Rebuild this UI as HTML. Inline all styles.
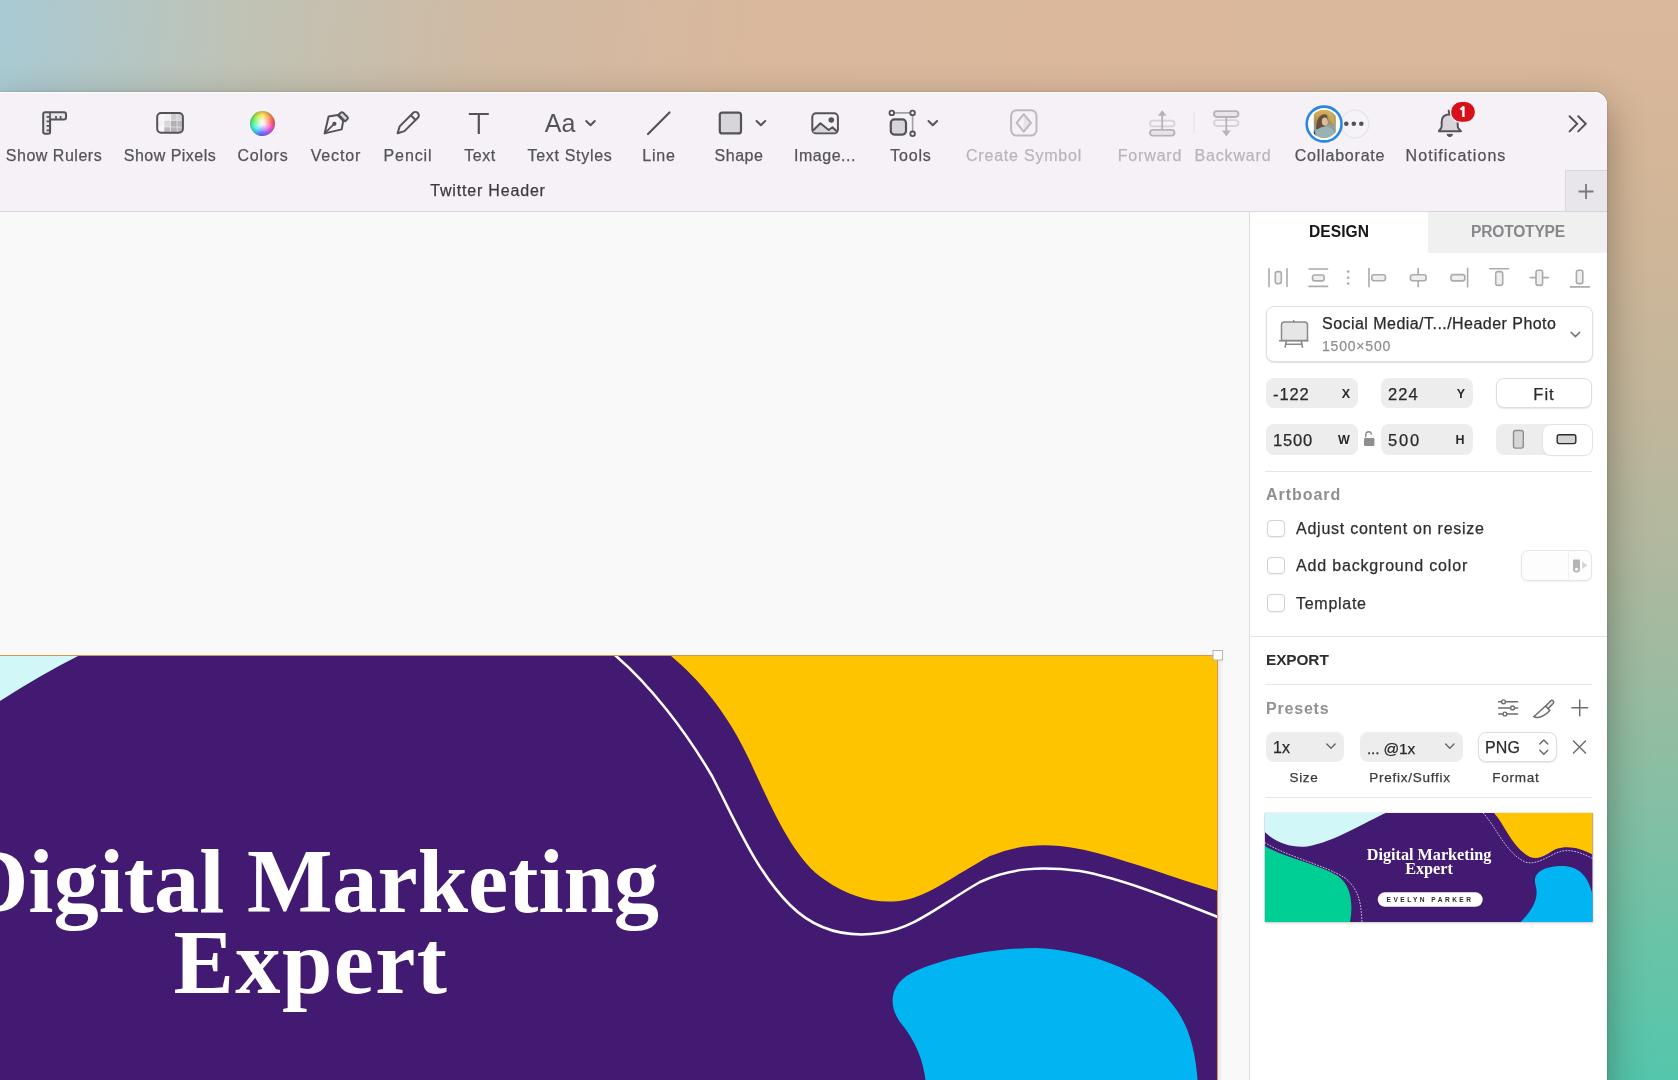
<!DOCTYPE html>
<html><head><meta charset="utf-8">
<style>
*{box-sizing:border-box;margin:0;padding:0}
html,body{width:1678px;height:1080px;overflow:hidden}
body{position:relative;font-family:"Liberation Sans",sans-serif;background:#dbb89c}
svg{position:absolute;left:0;top:0;overflow:visible}
.t{will-change:transform}
.r{-webkit-text-stroke:.25px currentColor}
</style></head><body>
<div style="position:absolute;left:0px;top:0px;width:1678px;height:1080px;background:linear-gradient(97deg,#a8cad4 0%,#bfc3b6 13%,#d0baa3 27%,#d9b89d 42%,#dbb89c 60%,#d9b89c 100%)"></div><div style="position:absolute;left:1560px;top:0px;width:118px;height:1080px;background:linear-gradient(180deg,#dab89c 0%,#d6b698 12%,#cdb699 25%,#c3b69b 36%,#b2b89e 50%,#9dbba1 62%,#86bfa4 74%,#6cc3a7 86%,#54c6ab 100%)"></div><div style="position:absolute;left:0px;top:92px;width:1607px;height:1000px;border-top-right-radius:13px;box-shadow:0 14px 38px rgba(40,35,25,.42),0 0 2px rgba(0,0,0,.25)"></div><div style="position:absolute;left:0px;top:92px;width:1607px;height:1000px;border-top-right-radius:13px;background:#f9f9f9;overflow:hidden"></div><div style="position:absolute;left:0px;top:92px;width:1607px;height:119px;border-top-right-radius:13px;background:#f5f1f7;box-shadow:inset 0 1px 0 rgba(255,255,255,.9)"></div><div style="position:absolute;left:0px;top:211px;width:1607px;height:1px;background:#d9d6db"></div><div style="position:absolute;left:1565px;top:170px;width:42px;height:41px;background:#e9e6eb;border-left:1px solid #d9d6db;border-top:1px solid #d9d6db"></div><svg width="1678" height="1080"><path d="M1578.5 191.5h15M1586 184v15" stroke="#7b787e" stroke-width="1.8"/></svg><div class="t r" style="position:absolute;left:-945.84px;top:147.76px;width:2000px;text-align:center;font-family:'Liberation Sans';font-size:16px;line-height:16px;color:#555258;font-weight:400;letter-spacing:0.52px;white-space:nowrap;">Show Rulers</div><div class="t r" style="position:absolute;left:-829.66px;top:147.76px;width:2000px;text-align:center;font-family:'Liberation Sans';font-size:16px;line-height:16px;color:#555258;font-weight:400;letter-spacing:0.47px;white-space:nowrap;">Show Pixels</div><div class="t r" style="position:absolute;left:-737.21px;top:147.76px;width:2000px;text-align:center;font-family:'Liberation Sans';font-size:16px;line-height:16px;color:#555258;font-weight:400;letter-spacing:0.79px;white-space:nowrap;">Colors</div><div class="t r" style="position:absolute;left:-663.75px;top:147.76px;width:2000px;text-align:center;font-family:'Liberation Sans';font-size:16px;line-height:16px;color:#555258;font-weight:400;letter-spacing:0.89px;white-space:nowrap;">Vector</div><div class="t r" style="position:absolute;left:-592.15px;top:147.76px;width:2000px;text-align:center;font-family:'Liberation Sans';font-size:16px;line-height:16px;color:#555258;font-weight:400;letter-spacing:0.89px;white-space:nowrap;">Pencil</div><div class="t r" style="position:absolute;left:-520.21px;top:147.76px;width:2000px;text-align:center;font-family:'Liberation Sans';font-size:16px;line-height:16px;color:#555258;font-weight:400;letter-spacing:0.58px;white-space:nowrap;">Text</div><div class="t r" style="position:absolute;left:-430.15px;top:147.76px;width:2000px;text-align:center;font-family:'Liberation Sans';font-size:16px;line-height:16px;color:#555258;font-weight:400;letter-spacing:0.69px;white-space:nowrap;">Text Styles</div><div class="t r" style="position:absolute;left:-341.09px;top:147.76px;width:2000px;text-align:center;font-family:'Liberation Sans';font-size:16px;line-height:16px;color:#555258;font-weight:400;letter-spacing:0.82px;white-space:nowrap;">Line</div><div class="t r" style="position:absolute;left:-260.75px;top:147.76px;width:2000px;text-align:center;font-family:'Liberation Sans';font-size:16px;line-height:16px;color:#555258;font-weight:400;letter-spacing:0.5px;white-space:nowrap;">Shape</div><div class="t r" style="position:absolute;left:-174.83px;top:147.76px;width:2000px;text-align:center;font-family:'Liberation Sans';font-size:16px;line-height:16px;color:#555258;font-weight:400;letter-spacing:0.54px;white-space:nowrap;">Image...</div><div class="t r" style="position:absolute;left:-88.60px;top:147.76px;width:2000px;text-align:center;font-family:'Liberation Sans';font-size:16px;line-height:16px;color:#555258;font-weight:400;letter-spacing:0.8px;white-space:nowrap;">Tools</div><div class="t r" style="position:absolute;left:24.09px;top:147.76px;width:2000px;text-align:center;font-family:'Liberation Sans';font-size:16px;line-height:16px;color:#b9b5bb;font-weight:400;letter-spacing:0.78px;white-space:nowrap;">Create Symbol</div><div class="t r" style="position:absolute;left:150.22px;top:147.76px;width:2000px;text-align:center;font-family:'Liberation Sans';font-size:16px;line-height:16px;color:#b9b5bb;font-weight:400;letter-spacing:0.85px;white-space:nowrap;">Forward</div><div class="t r" style="position:absolute;left:233.01px;top:147.76px;width:2000px;text-align:center;font-family:'Liberation Sans';font-size:16px;line-height:16px;color:#b9b5bb;font-weight:400;letter-spacing:0.82px;white-space:nowrap;">Backward</div><div class="t r" style="position:absolute;left:339.60px;top:147.76px;width:2000px;text-align:center;font-family:'Liberation Sans';font-size:16px;line-height:16px;color:#555258;font-weight:400;letter-spacing:0.79px;white-space:nowrap;">Collaborate</div><div class="t r" style="position:absolute;left:455.93px;top:147.76px;width:2000px;text-align:center;font-family:'Liberation Sans';font-size:16px;line-height:16px;color:#555258;font-weight:400;letter-spacing:1.05px;white-space:nowrap;">Notifications</div><div class="t r" style="position:absolute;left:-511.59px;top:183.26px;width:2000px;text-align:center;font-family:'Liberation Sans';font-size:16px;line-height:16px;color:#3c3a3f;font-weight:400;letter-spacing:0.82px;white-space:nowrap;">Twitter Header</div><div class="t r" style="position:absolute;left:-440.20px;top:110.64px;width:2000px;text-align:center;font-family:'Liberation Sans';font-size:25px;line-height:25px;color:#555258;font-weight:400;letter-spacing:0px;white-space:nowrap;-webkit-text-stroke:0">Aa</div><svg width="1678" height="1080"><path d="M43.2 114.2q0-2 2-2h18.8q2 0 2 2v3.2q0 2-2 2h-13.9v12.3q0 2-2 2h-2.9q-2 0-2-2z" fill="#e9e6ea" fill="none" stroke="#555258" stroke-width="2" stroke-linecap="round" stroke-linejoin="round"/><path d="M50 112.5V133.5M46.6 116.9H50M46.6 121.3H50M46.6 125.8H50M46.6 130.3H50M56 115.9V119M60.6 115.9V119" stroke="#555258" stroke-width="1.7"/><defs><clipPath id="pxc"><rect x="157.2" y="113" width="25.7" height="19.8" rx="4"/></clipPath></defs><g clip-path="url(#pxc)"><rect x="157.5" y="113.5" width="6.6" height="6.9" fill="#f7f5f8"/><rect x="164" y="113.5" width="6.6" height="6.9" fill="#f2f0f3"/><rect x="170.5" y="113.5" width="6.6" height="6.9" fill="#cfccd1"/><rect x="177" y="113.5" width="6.6" height="6.9" fill="#d4d1d6"/><rect x="157.5" y="120.3" width="6.6" height="6.9" fill="#f3f1f4"/><rect x="164" y="120.3" width="6.6" height="6.9" fill="#d9d6db"/><rect x="170.5" y="120.3" width="6.6" height="6.9" fill="#b3b0b5"/><rect x="177" y="120.3" width="6.6" height="6.9" fill="#b8b5ba"/><rect x="157.5" y="127" width="6.6" height="6.9" fill="#f7f5f8"/><rect x="164" y="127" width="6.6" height="6.9" fill="#bcb9be"/><rect x="170.5" y="127" width="6.6" height="6.9" fill="#b5b2b7"/><rect x="177" y="127" width="6.6" height="6.9" fill="#bdbabf"/><path d="M164 113V133M170.5 113V133M177 113V133M157 120.3H183M157 127H183" stroke="#ffffff" stroke-opacity=".55" stroke-width=".9"/></g><rect x="157.2" y="113" width="25.7" height="19.8" rx="4" fill="none" stroke="#555258" stroke-width="2" stroke-linecap="round" stroke-linejoin="round"/><path d="M324.6 133.4L328.6 116.5L337.6 115.1L343.2 120.8L341.7 129.4Z" fill="none" fill="none" stroke="#555258" stroke-width="2" stroke-linecap="round" stroke-linejoin="round"/><path d="M324.8 133.2L334.2 123.9" stroke="#555258" stroke-width="1.8"/><circle cx="334.4" cy="123.8" r="2.1" fill="#555258"/><path d="M338.6 114.8l2-2q1.3-1.3 2.6 0l4 4q1.3 1.3 0 2.6l-2 2z" fill="#dcd9de" fill="none" stroke="#555258" stroke-width="2" stroke-linecap="round" stroke-linejoin="round"/><g transform="translate(397.6 133.2) rotate(-45)"><path d="M0 0L6.3 -3.4H25.2A3.4 3.4 0 0 1 25.2 3.4H6.3Z" fill="none" fill="none" stroke="#555258" stroke-width="2" stroke-linecap="round" stroke-linejoin="round"/><path d="M22 -3.4V3.4" stroke="#555258" stroke-width="2"/></g><path d="M468.8 114h20M478.8 114v20" stroke="#555258" stroke-width="2.2"/><path d="M586.2 121l4.3 4.3l4.3-4.3" fill="none" stroke="#555258" stroke-width="2" stroke-linecap="round" stroke-linejoin="round"/><path d="M648 134L669.5 112.5" stroke="#555258" stroke-width="2.2" stroke-linecap="round"/><rect x="719.8" y="112.6" width="21.2" height="20.8" rx="2.5" fill="#d8d5da" stroke="#555258" stroke-width="2.2"/><path d="M756.6 121l4.3 4.3l4.3-4.3" fill="none" stroke="#555258" stroke-width="2" stroke-linecap="round" stroke-linejoin="round"/><rect x="812.3" y="113.3" width="25.6" height="20" rx="3.8" fill="none" fill="none" stroke="#555258" stroke-width="2" stroke-linecap="round" stroke-linejoin="round"/><path d="M813.3 130.2L820.4 123.2L828.7 130L832.5 127.3L836.7 131.3V132.3H813.3Z" fill="#d8d5da" stroke="none"/><path d="M813.3 130.2L820.4 123.2L828.7 130L832.5 127.3L836.7 131.3" fill="none" fill="none" stroke="#555258" stroke-width="2" stroke-linecap="round" stroke-linejoin="round"/><circle cx="831.3" cy="120" r="2.8" fill="#555258"/><path d="M891.8 112.9H912.6V133.8" stroke="#a19ea4" stroke-width="1.6" fill="none"/><rect x="890.8" y="119.4" width="15.2" height="15.2" rx="3.5" fill="#d8d5da" stroke="#555258" stroke-width="2.2"/><circle cx="891.8" cy="112.9" r="2.3" fill="#f5f1f7" stroke="#555258" stroke-width="1.8"/><circle cx="912.6" cy="112.9" r="2.3" fill="#f5f1f7" stroke="#555258" stroke-width="1.8"/><circle cx="912.6" cy="133.8" r="2.3" fill="#f5f1f7" stroke="#555258" stroke-width="1.8"/><path d="M928.5 121l4.3 4.3l4.3-4.3" fill="none" stroke="#555258" stroke-width="2" stroke-linecap="round" stroke-linejoin="round"/><rect x="1011.1" y="110.2" width="25.4" height="25.4" rx="5.5" fill="none" stroke="#bdb9bf" stroke-width="2" stroke-linecap="round" stroke-linejoin="round"/><path d="M1023.8 114.2L1031 122.9L1023.8 131.6Z" fill="#e6e3e8"/><path d="M1023.8 114.2L1031 122.9L1023.8 131.6L1016.6 122.9Z" fill="none" stroke="#bdb9bf" stroke-width="2" stroke-linecap="round" stroke-linejoin="round"/><rect x="1150" y="120.6" width="24.5" height="5.8" rx="2.9" fill="none" stroke="#d6d2d8" stroke-width="1.8"/><rect x="1150" y="129.8" width="24.5" height="5.8" rx="2.9" fill="#e8e5ea" stroke="#b6b2b8" stroke-width="1.8"/><path d="M1162.2 129.8V113" stroke="#b6b2b8" stroke-width="1.8"/><path d="M1157.8 115.8L1162.2 110.2L1166.6 115.8Z" fill="#b6b2b8"/><path d="M1194 112.4V133.3" stroke="#e2dfe4" stroke-width="1"/><rect x="1214" y="111.2" width="24.5" height="5.8" rx="2.9" fill="#e8e5ea" stroke="#b6b2b8" stroke-width="1.8"/><rect x="1214" y="120.2" width="24.5" height="5.8" rx="2.9" fill="none" stroke="#d6d2d8" stroke-width="1.8"/><path d="M1226.3 117V133" stroke="#b6b2b8" stroke-width="1.8"/><path d="M1221.9 130.6L1226.3 136.3L1230.7 130.6Z" fill="#b6b2b8"/><circle cx="1355" cy="124" r="13.8" fill="#f6f3f8" stroke="#e6e3e8" stroke-width="1.2"/><circle cx="1346.3" cy="123.8" r="2.3" fill="#555258"/><circle cx="1353.8" cy="123.8" r="2.3" fill="#555258"/><circle cx="1361.3" cy="123.8" r="2.3" fill="#555258"/><defs><clipPath id="av"><circle cx="1324.1" cy="124" r="14.2"/></clipPath><linearGradient id="avg" x1="0" y1="0" x2="0" y2="1"><stop offset="0" stop-color="#d9b45c"/><stop offset=".45" stop-color="#a88f55"/><stop offset=".6" stop-color="#8fa3a0"/><stop offset="1" stop-color="#7f9898"/></linearGradient></defs><circle cx="1324.1" cy="124" r="17.4" fill="#fff" stroke="#2a87e0" stroke-width="2.6"/><filter id="avb" x="-20%" y="-20%" width="140%" height="140%"><feGaussianBlur stdDeviation="0.55"/></filter><g clip-path="url(#av)"><g filter="url(#avb)"><rect x="1313.8" y="109.7" width="22" height="28.2" fill="url(#avg)"/><path d="M1327 111l6 2l2 12l-4-3z" fill="#c9b26a" opacity=".7"/><path d="M1316 129q0-9 4-13q4-3 7-1l1 5q-3 5-5 9z" fill="#6a5038"/><ellipse cx="1324.8" cy="121.5" rx="3" ry="4" fill="#d9bba6"/><path d="M1314 138q1-9 8-11q6-1 10 2q3 3 4 9z" fill="#9ab2b3"/><path d="M1313.8 130l3 8h-3z" fill="#2a2a22"/></g></g><path d="M1438.9 131.2H1460.9L1458.4 128.3Q1457.7 127.4 1457.7 125.8V121.8Q1457.7 114.6 1449.8 114.3Q1441.7 114.6 1441.7 121.8V125.8Q1441.7 127.4 1441 128.3Z" fill="#d9d6db" fill="none" stroke="#555258" stroke-width="2" stroke-linecap="round" stroke-linejoin="round"/><path d="M1449.6 114.3L1448.6 110.6" stroke="#555258" stroke-width="2" stroke-linecap="round"/><path d="M1447 134.4H1452.6Q1451.8 136.6 1449.8 136.6Q1447.8 136.6 1447 134.4Z" fill="#555258" stroke="#555258" stroke-width="1"/><rect x="1450.5" y="101.4" width="25" height="21" rx="10.5" fill="#d8101a" stroke="#f5f1f7" stroke-width="1.2"/><path d="M1460.4 109.6L1463.4 107.2V116.9" fill="none" stroke="#fff" stroke-width="2.4" stroke-linejoin="round"/><path d="M1569.6 116.2l7.6 7.6-7.6 7.6M1578.2 116.2l7.6 7.6-7.6 7.6" fill="none" stroke="#555258" stroke-width="2" stroke-linecap="round"/></svg><div style="position:absolute;left:250.1px;top:110.5px;width:25px;height:25px;border-radius:50%;background:radial-gradient(circle closest-side,rgba(0,0,0,0) 72%,rgba(40,30,50,.28) 100%),radial-gradient(circle closest-side,#fffbe8 0%,rgba(255,255,255,.8) 20%,rgba(255,255,255,0) 75%),conic-gradient(from 0deg,#ffe15a,#ffa24a 12%,#ff5e5e 22%,#ff50c8 32%,#b25cf2 42%,#5f78ff 52%,#4ad8ff 62%,#4cf7c8 70%,#5ef56a 80%,#b8f04a 90%,#ffe15a)"></div><svg width="1678" height="1080"><defs><clipPath id="ab"><rect x="0" y="655.5" width="1217.5" height="430"/></clipPath></defs><g clip-path="url(#ab)"><rect x="0" y="655" width="1218" height="430" fill="#431a72"/><path d="M0 655H80Q42 674 0 701Z" fill="#d2f7f8"/><path d="M669.9 655C700 680 730 715 754 770C775 815 795 860 825 880C850 898 880 905 905 900C930 895 955 875 990 856C1015 846 1035 844 1060 846C1100 850 1150 870 1218 891V655Z" fill="#ffc400"/><path d="M614.9 655C650 685 685 730 712 776C735 820 755 870 790 905C815 930 845 938 880 933C915 928 940 905 980 882C1010 868 1040 866 1080 871C1120 878 1170 898 1218 917" fill="none" stroke="#fff" stroke-width="2.5"/><path d="M926 1085C924 1060 915 1040 900 1022C888 1005 890 985 910 974C935 960 990 948 1036 948C1080 950 1130 965 1162 993C1185 1015 1195 1040 1198 1085Z" fill="#00b5f2"/></g><rect x="1218" y="656" width="5" height="424" fill="url(#abs)"/><defs><linearGradient id="abs" x1="0" x2="1"><stop offset="0" stop-color="#000" stop-opacity=".07"/><stop offset="1" stop-color="#000" stop-opacity="0"/></linearGradient></defs><path d="M0 655.5H1217.5V1080" fill="none" stroke="#d9974c" stroke-width="1"/><rect x="1213" y="650.5" width="9.5" height="9.5" fill="#fff" stroke="#b4b4b4" stroke-width="1"/></svg><div class="t" style="position:absolute;left:-689.00px;top:836.61px;width:2000px;text-align:center;font-family:'Liberation Serif';font-size:90.5px;line-height:90.5px;color:#fff;font-weight:700;letter-spacing:0px;white-space:nowrap;">Digital Marketing</div><div class="t" style="position:absolute;left:-688.80px;top:918.21px;width:2000px;text-align:center;font-family:'Liberation Serif';font-size:90.5px;line-height:90.5px;color:#fff;font-weight:700;letter-spacing:1.4px;white-space:nowrap;">Expert</div><div style="position:absolute;left:1249px;top:212px;width:358px;height:868px;background:#fff;border-left:1px solid #dcdcdc"></div><div style="position:absolute;left:1428px;top:212px;width:179px;height:41px;background:#f0f0f0"></div><div class="t" style="position:absolute;left:338.93px;top:223.79px;width:2000px;text-align:center;font-family:'Liberation Sans';font-size:15.6px;line-height:15.6px;color:#161616;font-weight:700;letter-spacing:0.05px;white-space:nowrap;">DESIGN</div><div class="t" style="position:absolute;left:517.89px;top:223.79px;width:2000px;text-align:center;font-family:'Liberation Sans';font-size:15.6px;line-height:15.6px;color:#88868a;font-weight:700;letter-spacing:-0.22px;white-space:nowrap;">PROTOTYPE</div><svg width="1678" height="1080"><path d="M1269 268.8V286.6M1287 268.8V286.6" stroke="#ababab" stroke-width="1.6" stroke-linecap="round"/><rect x="1275.3" y="271.6" width="6" height="12" rx="2.2" fill="#efefef" stroke="#ababab" stroke-width="1.6" stroke-linecap="round"/><path d="M1309 269H1327.6M1309 286.4H1327.6" stroke="#ababab" stroke-width="1.6" stroke-linecap="round"/><rect x="1312.5" y="275" width="11.7" height="5.9" rx="2.2" fill="#efefef" stroke="#ababab" stroke-width="1.6" stroke-linecap="round"/><circle cx="1348.2" cy="271.6" r="1.3" fill="#ababab"/><circle cx="1348.2" cy="277.7" r="1.3" fill="#ababab"/><circle cx="1348.2" cy="283.6" r="1.3" fill="#ababab"/><path d="M1369 268.6V286.8" stroke="#ababab" stroke-width="1.6" stroke-linecap="round"/><rect x="1371.8" y="274.7" width="13.7" height="6" rx="2.2" fill="#efefef" stroke="#ababab" stroke-width="1.6" stroke-linecap="round"/><path d="M1418.2 268.6V286.8" stroke="#ababab" stroke-width="1.6" stroke-linecap="round"/><rect x="1410.4" y="274.7" width="15.7" height="6" rx="2.2" fill="#efefef" stroke="#ababab" stroke-width="1.6" stroke-linecap="round"/><path d="M1467.6 268.4V286.9" stroke="#ababab" stroke-width="1.6" stroke-linecap="round"/><rect x="1451" y="274.6" width="13.8" height="6.3" rx="2.2" fill="#efefef" stroke="#ababab" stroke-width="1.6" stroke-linecap="round"/><path d="M1489.8 268.8H1508.5" stroke="#ababab" stroke-width="1.6" stroke-linecap="round"/><rect x="1495.7" y="271.6" width="7" height="13.8" rx="2.2" fill="#efefef" stroke="#ababab" stroke-width="1.6" stroke-linecap="round"/><path d="M1530.3 277.6H1548.5" stroke="#ababab" stroke-width="1.6" stroke-linecap="round"/><rect x="1536" y="270.2" width="6.6" height="15.2" rx="2.2" fill="#efefef" stroke="#ababab" stroke-width="1.6" stroke-linecap="round"/><path d="M1570.4 286.9H1589.3" stroke="#ababab" stroke-width="1.6" stroke-linecap="round"/><rect x="1576.4" y="270.2" width="6.4" height="13.4" rx="2.2" fill="#efefef" stroke="#ababab" stroke-width="1.6" stroke-linecap="round"/></svg><div style="position:absolute;left:1265.5px;top:306px;width:327px;height:56px;background:#fff;border:1px solid #e0e0e0;border-radius:8px;box-shadow:0 1px 1.5px rgba(0,0,0,.12)"></div><svg width="1678" height="1080"><path d="M1281.5 340.5V324.8q0-2.8 2.8-2.8h20.4q2.8 0 2.8 2.8V340.5Z" fill="#e6e6e6" stroke="#8a8a8a" stroke-width="1.5"/><path d="M1279 340.8H1308.4M1286.3 341L1285 347.6M1301.3 341L1302.6 347.6M1285.8 344.2H1301.8" stroke="#8a8a8a" stroke-width="1.6"/><path d="M1293.7 322V320" stroke="#8a8a8a" stroke-width="1.5"/><path d="M1571.2 332.4l4.2 4.2 4.2-4.2" fill="none" stroke="#777" stroke-width="1.5" stroke-linecap="round" stroke-linejoin="round"/></svg><div class="t r" style="position:absolute;left:1322.00px;top:316.16px;font-family:'Liberation Sans';font-size:16px;line-height:16px;color:#2a2a2a;font-weight:400;letter-spacing:0.46px;white-space:nowrap;">Social Media/T.../Header Photo</div><div class="t r" style="position:absolute;left:1322.00px;top:338.75px;font-family:'Liberation Sans';font-size:14px;line-height:14px;color:#8e8e8e;font-weight:400;letter-spacing:0.8px;white-space:nowrap;">1500×500</div><div style="position:absolute;left:1265.5px;top:377.5px;width:92px;height:30.5px;background:#ededed;border-radius:8px"></div><div style="position:absolute;left:1380.5px;top:377.5px;width:92px;height:30.5px;background:#ededed;border-radius:8px"></div><div style="position:absolute;left:1495.5px;top:377.5px;width:96.5px;height:30.5px;background:#fff;border:1px solid #dedede;border-radius:8px;box-shadow:0 1px 1.5px rgba(0,0,0,.1)"></div><div class="t r" style="position:absolute;left:1273.00px;top:385.73px;font-family:'Liberation Sans';font-size:16.5px;line-height:16.5px;color:#2a2a2a;font-weight:400;letter-spacing:0.9px;white-space:nowrap;">-122</div><div class="t r" style="position:absolute;left:1388.00px;top:385.73px;font-family:'Liberation Sans';font-size:16.5px;line-height:16.5px;color:#2a2a2a;font-weight:400;letter-spacing:1.1px;white-space:nowrap;">224</div><div class="t" style="position:absolute;left:346.00px;top:387.92px;width:2000px;text-align:center;font-family:'Liberation Sans';font-size:12.5px;line-height:12.5px;color:#2a2a2a;font-weight:700;letter-spacing:0px;white-space:nowrap;">X</div><div class="t" style="position:absolute;left:461.00px;top:387.92px;width:2000px;text-align:center;font-family:'Liberation Sans';font-size:12.5px;line-height:12.5px;color:#2a2a2a;font-weight:700;letter-spacing:0px;white-space:nowrap;">Y</div><div class="t r" style="position:absolute;left:544.10px;top:385.73px;width:2000px;text-align:center;font-family:'Liberation Sans';font-size:16.5px;line-height:16.5px;color:#2a2a2a;font-weight:400;letter-spacing:1.0px;white-space:nowrap;">Fit</div><div style="position:absolute;left:1265.5px;top:424px;width:92px;height:30.5px;background:#ededed;border-radius:8px"></div><div style="position:absolute;left:1380.5px;top:424px;width:92px;height:30.5px;background:#ededed;border-radius:8px"></div><div class="t r" style="position:absolute;left:1273.00px;top:432.23px;font-family:'Liberation Sans';font-size:16.5px;line-height:16.5px;color:#2a2a2a;font-weight:400;letter-spacing:0.8px;white-space:nowrap;">1500</div><div class="t r" style="position:absolute;left:1388.00px;top:432.23px;font-family:'Liberation Sans';font-size:16.5px;line-height:16.5px;color:#2a2a2a;font-weight:400;letter-spacing:1.8px;white-space:nowrap;">500</div><div class="t" style="position:absolute;left:344.00px;top:434.02px;width:2000px;text-align:center;font-family:'Liberation Sans';font-size:12.5px;line-height:12.5px;color:#2a2a2a;font-weight:700;letter-spacing:0px;white-space:nowrap;">W</div><div class="t" style="position:absolute;left:460.00px;top:434.02px;width:2000px;text-align:center;font-family:'Liberation Sans';font-size:12.5px;line-height:12.5px;color:#2a2a2a;font-weight:700;letter-spacing:0px;white-space:nowrap;">H</div><div style="position:absolute;left:1495.5px;top:424px;width:96.5px;height:30.5px;background:#ededed;border-radius:8px"></div><div style="position:absolute;left:1543px;top:424.5px;width:49px;height:30px;background:#fff;border-radius:8px;box-shadow:0 0 0 1px #e2e2e2,0 1px 1.5px rgba(0,0,0,.1)"></div><svg width="1678" height="1080"><rect x="1513.5" y="430.5" width="9.8" height="17.6" rx="2" fill="#d6d6d6" stroke="#8e8e8e" stroke-width="1.4"/><rect x="1557.2" y="434.8" width="18.6" height="8.8" rx="2" fill="#d4d4d4" stroke="#2a2a2a" stroke-width="1.4"/><path d="M1365.8 437.5V435q0-3.2 2.8-3.2 2.8 0 2.8 3" fill="none" stroke="#8e8e8e" stroke-width="1.4"/><rect x="1364" y="438" width="10.4" height="8" rx="1.2" fill="#8e8e8e"/></svg><div style="position:absolute;left:1265px;top:470.5px;width:327px;height:1px;background:#e6e6e6"></div><div class="t" style="position:absolute;left:1266.00px;top:487.06px;font-family:'Liberation Sans';font-size:16px;line-height:16px;color:#8f8f8f;font-weight:700;letter-spacing:0.95px;white-space:nowrap;">Artboard</div><div style="position:absolute;left:1266.5px;top:519.5px;width:18px;height:17.5px;background:#fff;border:1px solid #d2d2d2;border-radius:4px;box-shadow:0 .5px 1px rgba(0,0,0,.06)"></div><div class="t r" style="position:absolute;left:1296.00px;top:521.26px;font-family:'Liberation Sans';font-size:16px;line-height:16px;color:#2e2e2e;font-weight:400;letter-spacing:0.75px;white-space:nowrap;">Adjust content on resize</div><div style="position:absolute;left:1266.5px;top:556.5px;width:18px;height:17.5px;background:#fff;border:1px solid #d2d2d2;border-radius:4px;box-shadow:0 .5px 1px rgba(0,0,0,.06)"></div><div class="t r" style="position:absolute;left:1296.00px;top:558.26px;font-family:'Liberation Sans';font-size:16px;line-height:16px;color:#2e2e2e;font-weight:400;letter-spacing:0.82px;white-space:nowrap;">Add background color</div><div style="position:absolute;left:1266.5px;top:594px;width:18px;height:17.5px;background:#fff;border:1px solid #d2d2d2;border-radius:4px;box-shadow:0 .5px 1px rgba(0,0,0,.06)"></div><div class="t r" style="position:absolute;left:1296.00px;top:595.76px;font-family:'Liberation Sans';font-size:16px;line-height:16px;color:#2e2e2e;font-weight:400;letter-spacing:0.72px;white-space:nowrap;">Template</div><div style="position:absolute;left:1520.5px;top:550.2px;width:71.5px;height:31.3px;background:#fdfdfd;border:1px solid #e6e6e6;border-radius:7px;box-shadow:0 1px 1.5px rgba(0,0,0,.07)"></div><div style="position:absolute;left:1567.5px;top:551px;width:1px;height:30px;background:#f1f1f1"></div><svg width="1678" height="1080"><path d="M1573 560.5q0-1 1-1h5q1 0 1 1v8.5a3.5 3.5 0 0 1-7 0z" fill="#b4b4b4"/><circle cx="1576.5" cy="569.2" r="1.5" fill="#fff"/><path d="M1582.2 561.5l5 3.8-5 3.8z" fill="#d4d4d4"/></svg><div style="position:absolute;left:1249px;top:636px;width:358px;height:1px;background:#e4e4e4"></div><div class="t" style="position:absolute;left:1266.00px;top:652.26px;font-family:'Liberation Sans';font-size:15.4px;line-height:15.4px;color:#2e2e2e;font-weight:700;letter-spacing:-0.1px;white-space:nowrap;">EXPORT</div><div style="position:absolute;left:1265px;top:683.5px;width:327px;height:1px;background:#e6e6e6"></div><div class="t" style="position:absolute;left:1266.00px;top:700.96px;font-family:'Liberation Sans';font-size:16px;line-height:16px;color:#929292;font-weight:700;letter-spacing:0.8px;white-space:nowrap;">Presets</div><div style="position:absolute;left:1265.5px;top:731.5px;width:78.5px;height:30.5px;background:#ededed;border-radius:8px"></div><div style="position:absolute;left:1359.5px;top:731.5px;width:103px;height:30.5px;background:#ededed;border-radius:8px"></div><div style="position:absolute;left:1477.5px;top:731.5px;width:79px;height:30.5px;background:#fff;border:1px solid #dedede;border-radius:8px;box-shadow:0 1px 1.5px rgba(0,0,0,.1)"></div><svg width="1678" height="1080"><path d="M1498.6 701.8H1517.6M1498.6 707.9H1517.6M1498.6 714H1517.6" stroke="#6e6e6e" stroke-width="1.5" fill="none" stroke-linecap="round"/><circle cx="1503.5" cy="701.8" r="1.9" fill="#fff" stroke="#6e6e6e" stroke-width="1.4"/><circle cx="1512.6" cy="707.9" r="1.9" fill="#fff" stroke="#6e6e6e" stroke-width="1.4"/><circle cx="1504.9" cy="714" r="1.9" fill="#fff" stroke="#6e6e6e" stroke-width="1.4"/><path d="M1545.6 706L1550.6 701q1.4-1.4 2.6 0q1.2 1.3 0 2.6L1548.3 708.6" fill="#e8e8e8" stroke="#6e6e6e" stroke-width="1.5" fill="none" stroke-linecap="round"/><path d="M1545.6 706L1533.8 716.6q1.5 1.2 4 0.9q6.5-0.8 12-6.9L1545.6 706z" fill="none" stroke="#6e6e6e" stroke-width="1.5" fill="none" stroke-linecap="round"/><path d="M1571.8 707.8H1587.6M1579.7 699.9V715.7" stroke="#6e6e6e" stroke-width="1.5" fill="none" stroke-linecap="round"/><path d="M1573.5 741l12 12M1585.5 741l-12 12" stroke="#6e6e6e" stroke-width="1.5" stroke-linecap="round"/><path d="M1326.8 744l4.2 4.2 4.2-4.2M1445.6 744l4.2 4.2 4.2-4.2" fill="none" stroke="#666" stroke-width="1.4" stroke-linecap="round" stroke-linejoin="round"/><path d="M1539.8 744l4 -4 4 4M1539.8 750.2l4 4 4-4" fill="none" stroke="#666" stroke-width="1.4" stroke-linecap="round" stroke-linejoin="round"/></svg><div class="t r" style="position:absolute;left:1273.00px;top:740.26px;font-family:'Liberation Sans';font-size:16px;line-height:16px;color:#2a2a2a;font-weight:400;letter-spacing:0px;white-space:nowrap;">1x</div><div class="t r" style="position:absolute;left:1367.00px;top:740.68px;font-family:'Liberation Sans';font-size:15.5px;line-height:15.5px;color:#2a2a2a;font-weight:400;letter-spacing:-0.2px;white-space:nowrap;">... @1x</div><div class="t r" style="position:absolute;left:1485.00px;top:740.26px;font-family:'Liberation Sans';font-size:16px;line-height:16px;color:#2a2a2a;font-weight:400;letter-spacing:0.1px;white-space:nowrap;">PNG</div><div class="t r" style="position:absolute;left:304.15px;top:770.87px;width:2000px;text-align:center;font-family:'Liberation Sans';font-size:13.5px;line-height:13.5px;color:#3a3a3a;font-weight:400;letter-spacing:0.7px;white-space:nowrap;">Size</div><div class="t r" style="position:absolute;left:410.38px;top:770.87px;width:2000px;text-align:center;font-family:'Liberation Sans';font-size:13.5px;line-height:13.5px;color:#3a3a3a;font-weight:400;letter-spacing:0.75px;white-space:nowrap;">Prefix/Suffix</div><div class="t r" style="position:absolute;left:516.38px;top:770.87px;width:2000px;text-align:center;font-family:'Liberation Sans';font-size:13.5px;line-height:13.5px;color:#3a3a3a;font-weight:400;letter-spacing:0.75px;white-space:nowrap;">Format</div><div style="position:absolute;left:1265px;top:797px;width:327px;height:1px;background:#e6e6e6"></div><div style="position:absolute;left:1264.7px;top:812.8px;width:328px;height:109.4px;box-shadow:0 0.5px 2px rgba(0,0,0,.22)"></div><svg width="1678" height="1080"><defs><clipPath id="tc"><rect x="1264.7" y="812.8" width="328" height="109.3"/></clipPath></defs><g clip-path="url(#tc)"><rect x="1264.7" y="812.8" width="328" height="109.3" fill="#431a72"/><path d="M1264.7 812.8H1386.3C1365 822 1335 842 1307 846.5C1290 848 1275 842 1264.7 832Z" fill="#d2f7f8"/><path d="M1264.7 846C1285 858 1318 864 1338 876C1352 886 1353 905 1350 922.2H1264.7Z" fill="#00cf95"/><path d="M1493.8 812.8C1505 825 1512 848 1530 857C1540 861 1548 853 1556 849C1568 845 1580 848 1592.7 854.4V812.8Z" fill="#ffc400"/><path d="M1520.6 922.2C1530 912 1540 900 1535.5 885C1532 872 1545 866 1562 866C1578 866 1588 875 1592.7 895V922.2Z" fill="#00b5f2"/><path d="M1264.7 842.4C1285 856 1325 865 1345 878C1360 890 1361 905 1362 922.2" fill="none" stroke="#fff" stroke-width=".7" stroke-dasharray="1.8 1.2"/><path d="M1483 812.8C1497 828 1505 852 1525 862C1538 866 1550 854 1562 851C1575 849 1585 855 1592.7 858.5" fill="none" stroke="#fff" stroke-width=".7" stroke-dasharray="1.8 1.2"/><rect x="1377.7" y="892.3" width="105" height="14.5" rx="7.25" fill="#fff"/></g></svg><div class="t" style="position:absolute;left:429.00px;top:847.03px;width:2000px;text-align:center;font-family:'Liberation Serif';font-size:16.2px;line-height:16.2px;color:#fff;font-weight:700;letter-spacing:0px;white-space:nowrap;">Digital Marketing</div><div class="t" style="position:absolute;left:429.00px;top:861.43px;width:2000px;text-align:center;font-family:'Liberation Serif';font-size:16.2px;line-height:16.2px;color:#fff;font-weight:700;letter-spacing:0px;white-space:nowrap;">Expert</div><div class="t" style="position:absolute;left:430.23px;top:896.61px;width:2000px;text-align:center;font-family:'Liberation Sans';font-size:6.6px;line-height:6.6px;color:#2a2a2a;font-weight:700;letter-spacing:2.45px;white-space:nowrap;">EVELYN PARKER</div></body></html>
